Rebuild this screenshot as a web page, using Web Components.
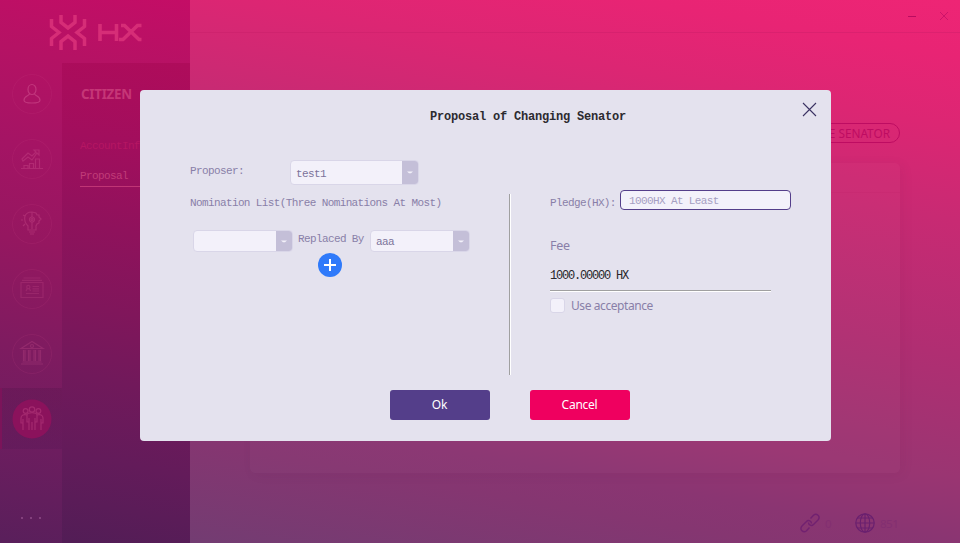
<!DOCTYPE html>
<html lang="en"><head><meta charset="utf-8"><title>HX Wallet</title>
<style>
html,body{margin:0;width:960px;height:543px;overflow:hidden}
body{font-family:"Noto Sans","Open Sans",sans-serif;--mono:"Liberation Mono",monospace}
</style></head><body>
<hx-app></hx-app>
<script>
function define(name, css, html) {
  customElements.define(name, class extends HTMLElement {
    constructor() {
      super();
      this.attachShadow({mode: 'open'}).innerHTML = `<style>*{box-sizing:border-box}${css}</style>${html}`;
    }
  });
}

define('hx-nav-item', `
:host{display:grid;place-items:center;width:62px;height:61px;padding-left:1px}
:host([active]){background:linear-gradient(#40104033,#3c124c26);box-shadow:inset 2px 0 #7b145a}
svg,::slotted(*){grid-area:1/1}
svg{width:40px;height:40px;fill:none}
.ring{stroke:#d14b8d;stroke-width:1;opacity:.13}
:host([active]) .ring{fill:#8b125c;stroke:none;opacity:1}
`, `<svg viewBox="-20 -20 40 40"><circle class="ring" r="19.5"/></svg><slot></slot>`);

const icons = {
  user: '<ellipse cx="0" cy="-4.5" rx="4" ry="5"/><path d="M-2.3-.3C-3 2-8 1.8-8 6.2C-8 8.7-5 9-0 9S8 8.7 8 6.2C8 1.8 3 2 2.3-.3"/>',
  chart: '<path d="M-11 9.500H11M-8 9V6.500H-4V9M-2.500 9V4.500H1.500V9M3.500 9V0H7.500V9M-10 0L-4-6L0-3L4-7L2-9H7V-4L5-6L0 1L-4-2L-9 2Z"/>',
  idea: '<path d="M0-12C-9-12-9-3-4 2V6H4V2L5 0L7-1V-3L9-5L7-7V-9L5-9L4-11ZM-3 8H3M-2 10H2M0-12V-7M0-2V5M-9-9L-7-8M-11-4H-9M-9 2L-7 0"/><circle cx="0" cy="-4.5" r="2.5"/><circle cx="0" cy="-4.5" r="1"/>',
  card: '<path d="M-11-6.500H11V8.500H-11ZM-10-8.700H10M-8.500-11H8.500M.5-2.500H7M.5-.2H7M.5 2H7M-6 4.500H7M-6 2L-4.800-.3H-2.500L-1.500 2"/><circle cx="-3.700" cy="-2" r="1.600"/>',
  bank: '<path d="M-11-5.500L0-12.500L11-5.500ZM-8.500-4V7M-7-4V7M-3.500-4V7M-2-4V7M2-4V7M3.500-4V7M7-4V7M8.500-4V7M-9.500 8H9.500M-11 10H11"/><circle cx="0" cy="-8" r="1.500"/>',
  people: '<circle cx="0" cy="-9.500" r="2.700"/><circle cx="-6.400" cy="-8" r="2.400"/><circle cx="6.400" cy="-8" r="2.400"/><path d="M-3 11V-1M-3 3H-5V-4C-5-7 5-7 5-4V3H3M3-1V11M0 3V11M-5-4C-8-5-11-4-11-1V4H-9V11M-9 0V4M5-4C8-5 11-4 11-1V4H9V11M9 0V4"/>'
};
customElements.define('hx-icon', class extends HTMLElement {
  connectedCallback() {
    this.attachShadow({mode: 'open'}).innerHTML =
      `<style>:host{display:block;width:40px;height:40px}svg{display:block;fill:none;stroke:#d75a96;stroke-width:1.2;opacity:var(--icon-alpha,.3)}</style>
       <svg width="40" height="40" viewBox="-20 -20 40 40">${icons[this.getAttribute('name')]}</svg>`;
  }
});

define('hx-sidebar', `
:host{display:flex;flex-direction:column;width:190px;height:543px;flex:none;background:linear-gradient(191deg,#c40d66 0%,#b51264 14%,#a41464 31%,#951760 47%,#7f1b60 65%,#6d1d5f 82%,#591f5b 100%)}
header{height:63px;flex:none;padding:15px 0 0 49px}
header svg{display:block}
.cols{display:flex;flex:1}
nav{width:62px;display:flex;flex-direction:column;gap:4px}
section{flex:1;background:linear-gradient(191deg,#af0c5b 0%,#a20e5d 18%,#8f125c 36%,#80165b 52%,#71195b 66%,#631b5a 82%,#521d56 100%);padding:21px 0 0 18px;color:#c53677;overflow:hidden}
h1{font:bold 13.4px/20px "Noto Sans";margin:0 0 0 1px;letter-spacing:-.3px}
a{display:block;font:11px/14px var(--mono);letter-spacing:-.615px}
.a1{margin-top:35px;color:#b51663}
.a2{margin-top:16px;height:18px;border-bottom:1px solid #c03575;color:#c03c78}
.dots{display:flex;gap:7px;padding:64px 0 0 21px}
.dots i{width:2px;height:2px;background:#83407d}
`, `<header><svg width="94" height="36" viewBox="0 0 94 36" fill="none" stroke="#d62d77" stroke-width="3.5">
<path d="M12 0V7.500L19 13L26 7.500V0M12 35V26.500L19 21L26 26.500V35M2.500 4V11.500L10 17.500L2.500 23.500V31M35.500 4V11.500L28 17.500L35.500 23.500V31"/><path stroke-width="3.6" d="M51 9V26M51 17.500H67.500M67.500 9V26M72 10.500H75.500L90 24.500H92.500M92.500 10.500H88.500L74 24.500H70"/></svg></header>
<div class="cols"><nav>
<hx-nav-item><hx-icon name="user" style="--icon-alpha:.48"></hx-icon></hx-nav-item>
<hx-nav-item><hx-icon name="chart"></hx-icon></hx-nav-item>
<hx-nav-item><hx-icon name="idea"></hx-icon></hx-nav-item>
<hx-nav-item><hx-icon name="card" style="--icon-alpha:.2"></hx-icon></hx-nav-item>
<hx-nav-item><hx-icon name="bank" style="--icon-alpha:.23"></hx-icon></hx-nav-item>
<hx-nav-item active><hx-icon name="people" style="--icon-alpha:.33"></hx-icon></hx-nav-item>
<div class="dots"><i></i><i></i><i></i></div></nav>
<section><h1>CITIZEN</h1><a class="a1">AccountInfo</a><a class="a2">Proposal</a></section></div>`);

define('hx-main', `
:host{display:flex;flex-direction:column;flex:1;height:543px}
.bar{height:33px;flex:none;border-bottom:1px solid #c41c6755;display:flex;justify-content:flex-end;gap:22px;padding:11px 11px 0 0}
svg{display:block;fill:none}
.pill{align-self:flex-end;margin:90px 60px 0 0;width:140px;height:20px;flex:none;border:1px solid #be0c62;border-radius:10px;font:11.8px/18px "Noto Sans";color:#be0c62;text-align:right;padding-right:9px;white-space:nowrap}
.card{margin:20px 60px 0 60px;height:310px;flex:none;border-radius:5px;background:#ffffff05;box-shadow:3px 2px 12px #50104010}
.card div{height:30px;border-bottom:1px solid #b0105018}
footer{display:flex;justify-content:flex-end;align-items:center;margin-top:39px;height:22px;padding-right:64px;color:#832f71;font:11.5px "Noto Sans"}
footer span{margin-left:5px;width:16px;letter-spacing:-.5px}
footer .n{width:30px}
`, `<div class="bar"><svg width="10" height="10"><path d="M1 5.500H9" stroke="#ba0b60"/></svg><svg width="10" height="10"><path d="M1 1L9 9M9 1L1 9" stroke="#c91369" stroke-width=".9"/></svg></div>
<div class="pill">CHANGE SENATOR</div><div class="card"><div></div></div>
<footer><svg width="20" height="20" viewBox="0 0 20 20" stroke="#712170" stroke-width="1.4"><path d="M10.500 5.500L13.500 2.300C16.500-.5 21 3.500 18 7L13.500 11.500C11.500 13.500 8.500 12 8.500 9.500M9.500 14.500L6.500 17.700C3.500 20.500-1 16.500 2 13L6.500 8.500C8.500 6.500 11.500 8 11.500 10.500"/></svg><span class="n">0</span>
<svg width="20" height="20" viewBox="0 0 20 20" stroke="#6a206f" stroke-width="1.2"><circle cx="10" cy="10" r="9.2"/><ellipse cx="10" cy="10" rx="4.700" ry="9.200"/><path d="M10 1V19M1 10H19M2.500 5H17.500M2.500 15H17.500"/></svg><span>851</span></footer>`);

define('hx-select', `
:host{display:flex;width:var(--w,100px);height:var(--h,22px);border:1px solid #d9d6e8;border-radius:4px;background:#f3f1fa;overflow:hidden;flex:none}
.v{flex:1;display:flex;align-items:center;padding:2px 0 0 5px;font:11px/12px var(--mono);letter-spacing:-.6px;color:#7c739b}
.b{width:16px;background:#c4bfd8;display:grid;place-items:center}
svg{display:block}
`, `<div class="v"><slot></slot></div><div class="b"><svg width="6" height="3"><path d="M0 .5H6L4 2.200H2Z" fill="#f3f1fa"/></svg></div>`);

define('hx-button', `
:host{display:grid;place-items:center;width:100px;height:30px;border-radius:3px;background:var(--bg);color:#fff;font:12px/18px "Noto Sans";letter-spacing:-.25px;padding-right:1px}
`, `<slot></slot>`);

define('hx-dialog', `
:host{position:absolute;left:140px;top:90px;width:691px;height:351px;border-radius:4px;background:#e4e2ee;display:flex;flex-direction:column;color:#897fa8}
header{height:60px;flex:none;display:flex;justify-content:space-between;padding:12px 14px 0 290px}
h2{margin:8px 0 0;font:bold 12px/14px var(--mono);letter-spacing:-.2px;color:#2c2a30}
svg{display:block}
.body{display:flex;height:225px;flex:none}
.left{width:369px;padding:10px 0 0 50px}
.rule{width:2px;height:181px;margin-top:44px;background:linear-gradient(90deg,#a0a0a0 50%,#fff 50%)}
.right{margin-left:39px;width:241px;padding-top:40px}
.m{font:11px/14px var(--mono);letter-spacing:-.615px;white-space:pre}
.row{display:flex}
.r1 .m{width:100px;margin-top:4px}
.list{margin-top:11px}
.r3{margin:20px 0 0 3px}.r3 .m{margin:2px 6px 0 5px;width:66px}
.add{margin:1px 0 0 128px}
.r1r{justify-content:space-between}.r1r .m{margin-top:6px}
.in{width:171px;height:20px;border:1px solid #543e8a;border-radius:4px;background:#f3f1fa;padding:3px 0 0 8px;color:#a69fc2}
.fee{font:12.500px/18px "Noto Sans";letter-spacing:-.3px;margin-top:27px}
.amt{width:221px;height:36px;border-bottom:1px solid #a0a0a0;box-shadow:0 1px #fff;padding-top:14px;color:#28262b;font-size:12px;letter-spacing:-1.200px}
.chk{display:flex;align-items:center;gap:6px;margin-top:6px;font:12px/18px "Noto Sans";letter-spacing:-.42px}
.chk i{width:15px;height:15px;margin-bottom:1px;border:1px solid #d9d6e8;border-radius:3px;background:#f3f1fa}
footer{display:flex;gap:40px;padding:15px 0 0 250px}
`, `<header><h2>Proposal of Changing Senator</h2><svg width="15" height="15"><path d="M1 1L14 14M14 1L1 14" stroke="#3b3263" stroke-width="1.100"/></svg></header>
<div class="body"><div class="left"><div class="row r1"><span class="m">Proposer:</span><hx-select style="--w:129px;--h:25px">test1</hx-select></div>
<div class="m list">Nomination List(Three Nominations At Most)</div>
<div class="row r3"><hx-select></hx-select><span class="m">Replaced By</span><hx-select>aaa</hx-select></div>
<svg class="add" width="24" height="24"><circle cx="12" cy="12" r="12" fill="#2f7afa"/><path d="M12 6V18M6 12H18" stroke="#fff" stroke-width="2"/></svg></div>
<div class="rule"></div>
<div class="right"><div class="row r1r"><span class="m">Pledge(HX):</span><div class="m in" style="margin:0">1000HX At Least</div></div>
<div class="fee">Fee</div><div class="m amt">1000.00000 HX</div><div class="chk"><i></i>Use acceptance</div></div></div>
<footer><hx-button style="--bg:#543e8a">Ok</hx-button><hx-button style="--bg:#ef005f">Cancel</hx-button></footer>`);

define('hx-app', `
:host{display:flex;position:relative;width:960px;height:543px;overflow:hidden;background:linear-gradient(190deg,#ee2575 0%,#e82474 8%,#dc2673 18%,#c82a73 31%,#b02e72 50%,#9a3572 67%,#8a3572 76%,#853671 81%,#733c72 95%,#6f3d72 100%)}
`, `<hx-sidebar></hx-sidebar><hx-main></hx-main><hx-dialog></hx-dialog>`);
</script></body></html>
